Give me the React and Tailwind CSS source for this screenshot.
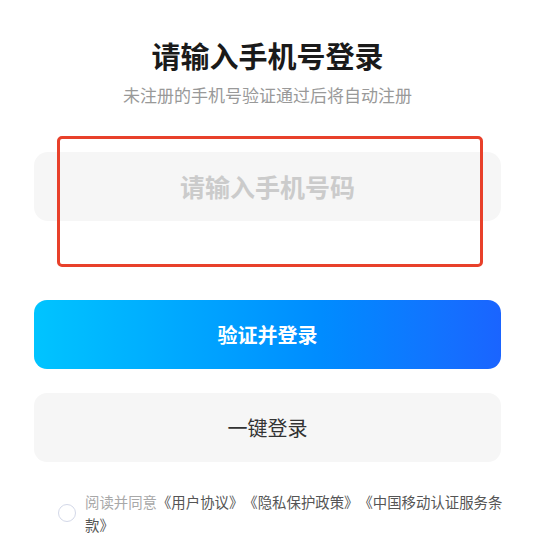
export default function App() {
  return (
    <div className="w-[535px] h-[558px] bg-white font-['Noto_Sans_CJK_SC','Noto_Sans',sans-serif] overflow-hidden [text-spacing-trim:space-all]">
      <div className="flex flex-col items-center pt-[37px] px-[34px]">
        <h1 className="text-[29px] leading-[36px] font-bold text-[#1a1a1a]">请输入手机号登录</h1>
        <p className="mt-[10px] text-[17px] leading-[24px] text-[#999999]">未注册的手机号验证通过后将自动注册</p>

        <div className="relative mt-[45px] w-full">
          <div className="h-[69px] w-full rounded-[14px] bg-[#f6f6f6] flex items-center justify-center">
            <span className="text-[25px] font-bold text-[#cbcbcb]">请输入手机号码</span>
          </div>
          <div className="absolute left-[23px] top-[-16px] w-[426px] h-[131px] border-[3px] border-[#e8402a] rounded-[5px] pointer-events-none" />
        </div>

        <button className="mt-[79px] w-full h-[69px] rounded-[13px] bg-gradient-to-r from-[#00c4ff] to-[#1a64ff] text-white text-[20px] font-bold">
          验证并登录
        </button>

        <button className="mt-[24px] w-full h-[69px] rounded-[13px] bg-[#f6f6f6] text-[#333333] text-[20px]">
          一键登录
        </button>

        <div className="mt-[28px] w-full flex items-center pl-[24px]">
          <span className="w-[18px] h-[18px] rounded-full border-[1.5px] border-[#d3d8e8] shrink-0" />
          <p className="ml-[9px] w-[430px] shrink-0 text-[14.4px] leading-[23px] text-[#555555]">
            <span className="text-[#a8a8a8]">阅读并同意</span>《用户协议》《隐私保护政策》《中国移动认证服务条款》
          </p>
        </div>
      </div>
    </div>
  );
}
